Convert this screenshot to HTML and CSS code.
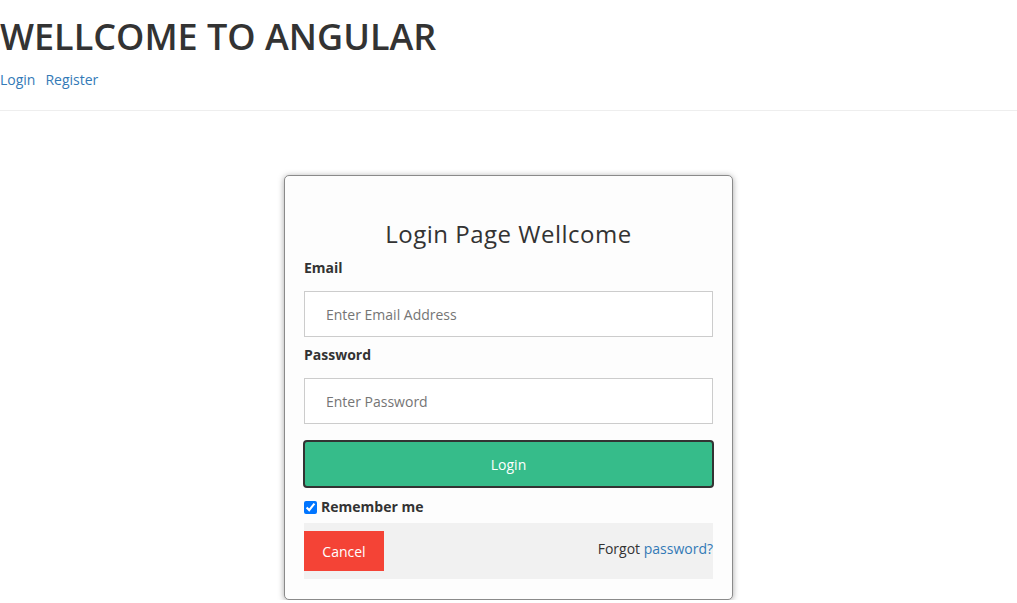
FILE: index.html
```html
<!DOCTYPE html>
<html lang="en">
<head>
<meta charset="utf-8">
<title>Angular</title>
<link rel="stylesheet" href="styles.css">
</head>
<body>
<header class="site-header">
  <h1 class="site-title">WELLCOME TO ANGULAR</h1>
  <nav class="site-nav">
    <a href="#" class="nav-link">Login</a>
    <a href="#" class="nav-link">Register</a>
  </nav>
</header>
<hr class="divider">
<main class="page">
  <form class="login-card">
    <h2 class="login-title">Login Page Wellcome</h2>
    <label class="field-label" for="email">Email</label>
    <input class="field-input" id="email" type="text" placeholder="Enter Email Address">
    <label class="field-label" for="password">Password</label>
    <input class="field-input" id="password" type="password" placeholder="Enter Password">
    <button type="button" class="btn-login">Login</button>
    <label class="remember"><input type="checkbox" class="remember-box" checked> Remember me</label>
    <div class="card-footer">
      <button type="button" class="btn-cancel">Cancel</button>
      <span class="forgot">Forgot <a href="#" class="forgot-link">password?</a></span>
    </div>
  </form>
</main>
</body>
</html>
```

FILE: styles.css
```css
* { box-sizing: border-box; }

html, body {
  margin: 0;
  padding: 0;
  background: #fff;
  font-family: "Open Sans", "Liberation Sans", sans-serif;
  font-size: 14px;
  line-height: 20px;
  color: #333;
}

.site-header { padding: 0; }

.site-title {
  margin: 17px 0 13px;
  font-size: 36px;
  line-height: 40px;
  font-weight: 600;
  color: #333;
}

.site-nav {
  display: flex;
  gap: 10px;
}

.nav-link {
  color: #337ab7;
  text-decoration: none;
  font-size: 14px;
}

.divider {
  margin: 20px 0 0;
  border: 0;
  border-top: 1px solid #eee;
}

.page {
  padding-top: 64px;
}

.login-card {
  width: 449px;
  margin: 0 auto;
  padding: 0 19px 20px;
  background: #fdfdfd;
  border: 1px solid #8a8a8a;
  border-radius: 5px;
  box-shadow: 0 1px 6px rgba(0,0,0,0.35);
  display: flex;
  flex-direction: column;
}

.login-title {
  margin: 43px 0 10px;
  text-align: center;
  font-size: 24px;
  line-height: 29px;
  font-weight: 500;
  letter-spacing: 0.5px;
  color: #333;
}

.field-label {
  font-weight: 700;
  margin-bottom: 5px;
}

.field-input {
  margin: 8px 0;
  height: 46px;
  padding: 12px 21px;
  border: 1px solid #ccc;
  font-family: inherit;
  font-size: 14px;
  color: #333;
  background: #fff;
  outline: none;
}

.field-input::placeholder { color: #757575; }

.btn-login {
  margin: 8px -1px 9px;
  height: 48px;
  background: #36bc8a;
  border: 2px solid #333;
  border-radius: 4px;
  color: #fff;
  font-family: inherit;
  font-size: 14px;
  cursor: pointer;
}

.remember {
  display: flex;
  align-items: center;
  font-weight: 700;
  margin: 0 0 6px;
  height: 20px;
}

.remember-box {
  margin: 0 4px 0 0;
  width: 13px;
  height: 13px;
}

.card-footer {
  display: flex;
  justify-content: space-between;
  align-items: flex-start;
  background: #f1f1f1;
  height: 56px;
}

.btn-cancel {
  margin: 8px 0;
  height: 40px;
  width: 80px;
  padding: 10px 18px;
  background: #f44336;
  color: #fff;
  border: 0;
  font-family: inherit;
  font-size: 14px;
  cursor: pointer;
}

.forgot {
  padding-top: 16px;
  color: #333;
}

.forgot-link {
  color: #337ab7;
  text-decoration: none;
}
```
